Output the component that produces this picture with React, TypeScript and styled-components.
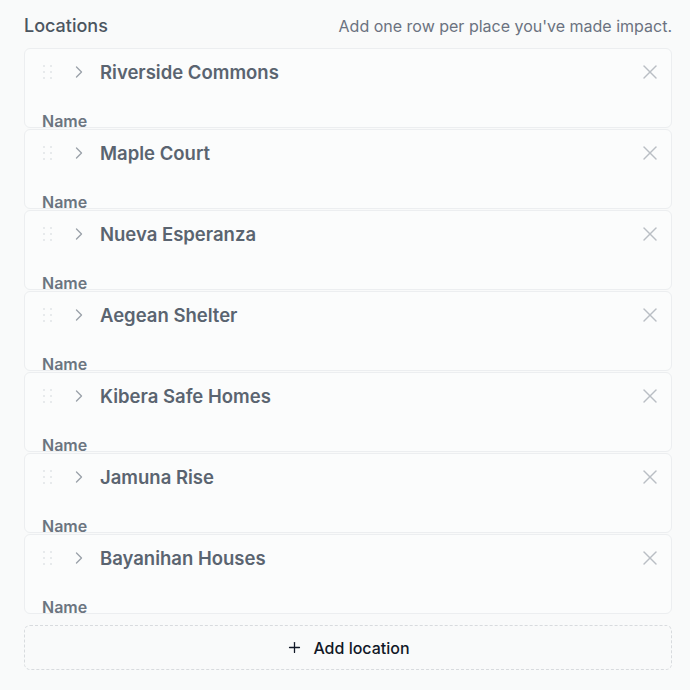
import React from 'react'
import styled, { createGlobalStyle } from 'styled-components'
import { ChevronRight, X, Plus } from 'lucide-react'

const GlobalStyle = createGlobalStyle`
  html, body {
    margin: 0;
    padding: 0;
    background: #f9fafa;
  }

  body {
    font-family: Inter, 'Noto Sans', sans-serif;
    -webkit-font-smoothing: antialiased;
  }
`

const Section = styled.section`
  padding: 14px 18px 20px 24px;
`

const Header = styled.div`
  display: flex;
  align-items: baseline;
  justify-content: space-between;
  margin-bottom: 10px;
`

const Heading = styled.h2`
  margin: 0;
  font-size: 18px;
  font-weight: 500;
  color: #4b5560;
  line-height: 24px;
`

const Hint = styled.p`
  margin: 0;
  font-size: 16px;
  color: #6b7280;
  line-height: 24px;
`

const List = styled.div`
  display: flex;
  flex-direction: column;
  gap: 1px;
`

const Card = styled.div`
  height: 80px;
  box-sizing: border-box;
  overflow: hidden;
  border: 1px solid #eceef0;
  border-radius: 6px;
  background: #fbfcfc;
  padding: 10px 9px 0 16px;
`

const CardHeader = styled.div`
  display: grid;
  grid-template-columns: 24px 28px 1fr 24px;
  align-items: center;
  height: 26px;
`

const Handle = styled.div`
  display: grid;
  grid-template-columns: repeat(2, 2px);
  grid-auto-rows: 2px;
  column-gap: 5px;
  row-gap: 4px;
  padding-left: 2px;

  span {
    background: #e1e4e7;
    border-radius: 1px;
  }
`

const Toggle = styled.button`
  display: flex;
  align-items: center;
  justify-content: center;
  border: 0;
  padding: 0;
  background: none;
  color: #9aa1a9;
  cursor: pointer;
`

const Title = styled.div`
  padding-left: 7px;
  font-size: 18.5px;
  font-weight: 600;
  color: #5a6470;
`

const Remove = styled.button`
  display: flex;
  align-items: center;
  justify-content: center;
  border: 0;
  padding: 0;
  background: none;
  color: #b9bec4;
  cursor: pointer;
`

const FieldLabel = styled.label`
  display: block;
  margin-top: 26px;
  padding-left: 1px;
  font-size: 16px;
  font-weight: 600;
  line-height: 20px;
  color: #6b7580;
`

const AddButton = styled.button`
  display: flex;
  align-items: center;
  justify-content: center;
  gap: 10px;
  width: 100%;
  height: 45px;
  margin-top: 11px;
  border: 1px dashed #d8dbde;
  border-radius: 6px;
  background: transparent;
  font-family: inherit;
  font-size: 16px;
  font-weight: 500;
  color: #111827;
  cursor: pointer;
`

const locations = [
  'Riverside Commons',
  'Maple Court',
  'Nueva Esperanza',
  'Aegean Shelter',
  'Kibera Safe Homes',
  'Jamuna Rise',
  'Bayanihan Houses',
]

function LocationRow({ name }: { name: string }) {
  return (
    <Card>
      <CardHeader>
        <Handle>
          {Array.from({ length: 6 }).map((_, i) => (
            <span key={i} />
          ))}
        </Handle>
        <Toggle aria-label="Expand">
          <ChevronRight size={20} strokeWidth={1.6} />
        </Toggle>
        <Title>{name}</Title>
        <Remove aria-label="Remove">
          <X size={24} strokeWidth={1.4} />
        </Remove>
      </CardHeader>
      <FieldLabel>Name</FieldLabel>
    </Card>
  )
}

export default function App() {
  return (
    <>
      <GlobalStyle />
      <Section>
        <Header>
          <Heading>Locations</Heading>
          <Hint>Add one row per place you've made impact.</Hint>
        </Header>
        <List>
          {locations.map((name) => (
            <LocationRow key={name} name={name} />
          ))}
        </List>
        <AddButton>
          <Plus size={17} strokeWidth={1.8} />
          Add location
        </AddButton>
      </Section>
    </>
  )
}
